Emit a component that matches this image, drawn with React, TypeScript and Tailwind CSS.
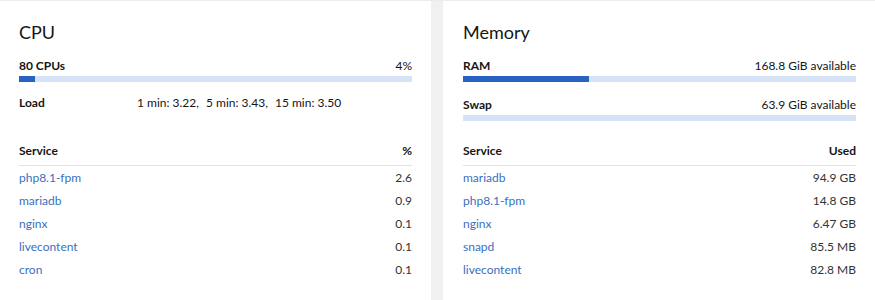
const cpuServices = [
  { name: 'php8.1-fpm', value: '2.6' },
  { name: 'mariadb', value: '0.9' },
  { name: 'nginx', value: '0.1' },
  { name: 'livecontent', value: '0.1' },
  { name: 'cron', value: '0.1' },
];

const memServices = [
  { name: 'mariadb', value: '94.9 GB' },
  { name: 'php8.1-fpm', value: '14.8 GB' },
  { name: 'nginx', value: '6.47 GB' },
  { name: 'snapd', value: '85.5 MB' },
  { name: 'livecontent', value: '82.8 MB' },
];

function Bar({ pct }: { pct: number }) {
  return (
    <div className="h-[6px] w-full bg-[#d6e2f5]">
      <div className="h-full bg-[#2a62c2]" style={{ width: `${pct}%` }} />
    </div>
  );
}

function ServiceTable({ head, rows, className }: { head: string; rows: { name: string; value: string }[]; className: string }) {
  return (
    <div className={className}>
      <div className="flex h-[29px] items-center justify-between border-b border-[#e2e2e2] pb-[1px] font-bold">
        <span>Service</span>
        <span>{head}</span>
      </div>
      <div>
        {rows.map((r) => (
          <div key={r.name} className="flex h-[23px] items-center justify-between">
            <a className="text-[#3a6fc0]">{r.name}</a>
            <span className="text-[#333]">{r.value}</span>
          </div>
        ))}
      </div>
    </div>
  );
}

export default function App() {
  return (
    <div
      className="flex h-[300px] w-[875px] gap-[12px] overflow-hidden border-t border-[#ececec] bg-[#f0f0f0] text-[12px] text-[#151515]"
      style={{ fontFamily: 'Lato, "Noto Sans", sans-serif' }}
    >
      <div className="w-[431px] shrink-0 bg-white px-[19px] pt-[19px]">
        <h2 className="text-[18px] leading-[24px]">CPU</h2>
        <div className="mt-[14px] flex h-[16px] items-center justify-between">
          <span className="font-bold">80 CPUs</span>
          <span>4%</span>
        </div>
        <div className="mt-[2px]">
          <Bar pct={4} />
        </div>
        <div className="mt-[13px] flex h-[16px] items-center gap-[7px] whitespace-nowrap">
          <span className="mr-[5px] w-[106px] font-bold">Load</span>
          <span>1 min: 3.22,</span>
          <span>5 min: 3.43,</span>
          <span>15 min: 3.50</span>
        </div>
        <ServiceTable head="%" rows={cpuServices} className="mt-[26px]" />
      </div>
      <div className="flex-1 bg-white pt-[19px] pr-[19px] pl-[20px]">
        <h2 className="text-[18px] leading-[24px]">Memory</h2>
        <div className="mt-[14px] flex h-[16px] items-center justify-between">
          <span className="font-bold">RAM</span>
          <span>168.8 GiB available</span>
        </div>
        <div className="mt-[2px]">
          <Bar pct={32} />
        </div>
        <div className="mt-[15px] flex h-[16px] items-center justify-between">
          <span className="font-bold">Swap</span>
          <span>63.9 GiB available</span>
        </div>
        <div className="mt-[2px]">
          <Bar pct={0} />
        </div>
        <ServiceTable head="Used" rows={memServices} className="mt-[16px]" />
      </div>
    </div>
  );
}
